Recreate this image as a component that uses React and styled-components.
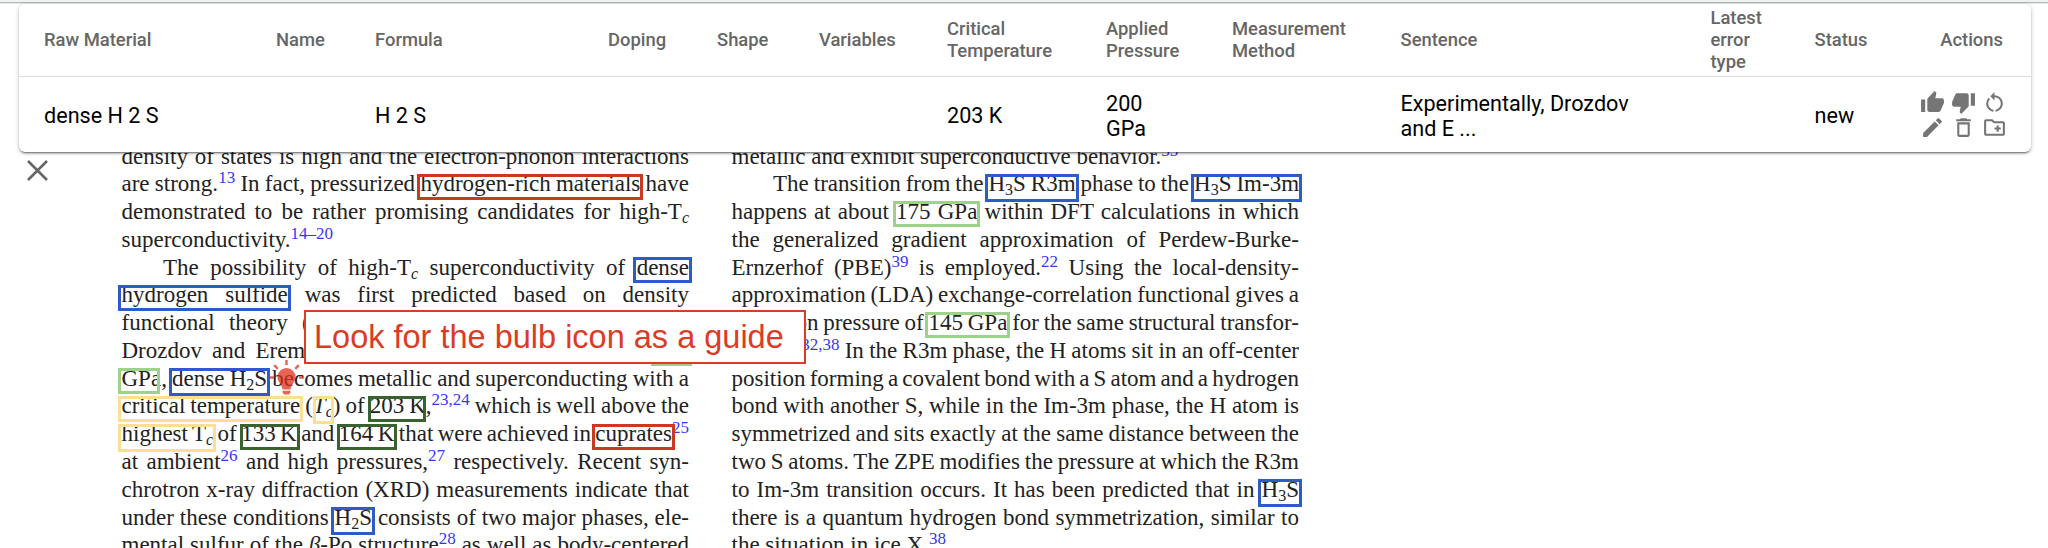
import React from "react";
import styled, { createGlobalStyle } from "styled-components";
import {
  MdThumbUp,
  MdThumbDown,
  MdRestartAlt,
  MdEdit,
  MdDeleteOutline,
  MdOutlineCreateNewFolder,
} from "react-icons/md";

const GlobalStyle = createGlobalStyle`
  * { box-sizing: border-box; }
  body { margin: 0; background: #fff; }
`;

const COLORS = {
  material: "#c93a1e",
  name: "#2d5cc8",
  pressure: "#9dd389",
  tc: "#fbdf94",
  value: "#3a6130",
};

const Page = styled.main`
  display: flex;
  flex-direction: column;
  height: 548px;
  overflow: hidden;
  font-family: Roboto, sans-serif;
`;

const TopEdge = styled.div`
  flex: none;
  height: 4px;
  border-top: 2px solid #f1f3f3;
  border-bottom: 1px solid #e8eaea;
  background: #b4b8b8;
`;

const Card = styled.section`
  position: relative;
  z-index: 2;
  flex: none;
  height: 148px;
  margin: 0 17px 0 19px;
  background: #fff;
  border-radius: 6px;
  box-shadow: 0 2px 2px -1px rgba(0, 0, 0, 0.5), 0 1px 4px rgba(0, 0, 0, 0.25);
`;

const Row = styled.div`
  display: grid;
  grid-template-columns: 232px 99px 233px 109px 102px 128px 159px 126px 168.5px 310px 104px 90px 1fr;
  align-items: center;
  padding: 0 25px;
`;

const HeadRow = styled(Row)`
  height: 73px;
  padding-bottom: 1px;
  border-bottom: 1px solid #dcdcdc;
  color: #666;
  font-size: 18.4px;
  font-weight: 500;
  line-height: 22px;
`;

const BodyRow = styled(Row)`
  height: 75px;
  padding-top: 3px;
  color: #000;
  font-size: 21.6px;
  line-height: 25.5px;
`;

const Cell = styled.div`
  width: ${(p) => p.$width || "auto"};
  text-align: ${(p) => p.$align || "left"};
  padding-right: ${(p) => p.$pad || 0};
`;

const Actions = styled.div`
  display: grid;
  grid-template-columns: repeat(3, 31px);
  justify-content: end;
  justify-items: center;
  align-items: center;
  grid-auto-rows: 25.5px;
  margin: -2px -4px 0 0;
  color: #757575;
  font-size: 25px;
  svg { display: block; }
`;

const Viewer = styled.section`
  position: relative;
  display: flex;
  align-items: flex-start;
  margin-top: -11px;
`;

const CloseButton = styled.button`
  flex: none;
  width: 121.5px;
  padding: 19px 0 0 27px;
  border: 0;
  background: none;
  text-align: left;
  svg { display: block; }
`;

const Column = styled.article`
  flex: none;
  width: 567.5px;
  margin-right: 42.5px;
  padding-top: 1.6px;
  color: #222;
  font-family: "Liberation Serif", serif;
  font-size: 23px;
  line-height: 27.77px;
`;

const Line = styled.div`
  height: 27.77px;
  padding-left: ${(p) => (p.$indent ? "41.5px" : 0)};
  white-space: nowrap;
  word-spacing: ${(p) => (p.$loose ? 0 : "-3px")};
  text-align: left;
  text-align-last: ${(p) => (p.$loose ? "left" : "justify")};
`;

const Ref = styled.sup`
  color: #3a36f5;
  font-size: 17px;
  line-height: 0;
  vertical-align: 8.4px;
`;

const Sub = styled.sub`
  font-size: 16px;
  font-style: ${(p) => (p.$italic ? "italic" : "normal")};
  line-height: 0;
  vertical-align: -3.5px;
`;

const Mark = styled.span`
  position: relative;
  &::after {
    content: "";
    position: absolute;
    top: 2.3px;
    bottom: ${(p) => (p.$tall ? "-5.3px" : "-3.3px")};
    left: ${(p) => p.$l ?? -3.5}px;
    right: ${(p) => p.$r ?? -3}px;
    border: 3px solid ${(p) => COLORS[p.$kind]};
  }
`;

const Callout = styled.aside`
  position: absolute;
  z-index: 1;
  top: 169px;
  left: 304px;
  display: flex;
  align-items: center;
  width: 502px;
  height: 54px;
  padding: 1px 0 0 8px;
  border: 2px solid #dc3b26;
  background: #fff;
  color: #dc3b26;
  font: 32.5px "Liberation Sans", sans-serif;
  white-space: nowrap;
`;

const BulbBadge = styled.svg`
  position: absolute;
  top: 219px;
  left: 269px;
`;

const Tc = () => (
  <>
    T<Sub $italic>c</Sub>
  </>
);
const Chem = ({ n, tail }) => (
  <>
    H<Sub>{n}</Sub>
    {tail}
  </>
);

const Bulb = () => (
  <BulbBadge width="35" height="35" viewBox="0 0 35 35" fill="#e2301c" stroke="none" opacity="0.75">
    <path d="M17.5 8a9.1 9.1 0 0 1 9.1 9.1c0 3.2-1.7 5-3.1 7.2-.9 1.5-1.7 3-2.1 5.2h-7.8c-.4-2.2-1.2-3.7-2.1-5.2-1.4-2.2-3.1-4-3.1-7.2A9.1 9.1 0 0 1 17.5 8z" />
    <path d="M13.6 30.8h7.8v1.4l-1.4 2.3h-5l-1.4-2.3z" />
    <path
      d="M17.5 0v5M5.2 5.2l3.6 3.6M29.8 5.2l-3.6 3.6M.3 17.5h4.6M30.1 17.5h4.6"
      stroke="#e2301c"
      strokeWidth="2.4"
    />
  </BulbBadge>
);

const headers = [
  "Raw Material",
  "Name",
  "Formula",
  "Doping",
  "Shape",
  "Variables",
  "Critical Temperature",
  "Applied Pressure",
  "Measurement Method",
  "Sentence",
  "Latest error type",
  "Status",
];
const headerWidths = { 6: "115px", 7: "80px", 8: "125px", 10: "60px" };

const record = [
  "dense H 2 S", "", "H 2 S", "", "", "", "203 K", "200 GPa", "",
  "Experimentally, Drozdov and E ...", "", "new",
];
const recordWidths = { 7: "50px", 9: "250px" };

export default function App() {
  return (
    <Page>
      <GlobalStyle />
      <TopEdge />
      <Card>
        <HeadRow>
          {headers.map((h, i) => (
            <Cell key={h} $width={headerWidths[i]}>{h}</Cell>
          ))}
          <Cell $align="right" $pad="3px">Actions</Cell>
        </HeadRow>
        <BodyRow>
          {record.map((v, i) => (
            <Cell key={i} $width={recordWidths[i]}>{v}</Cell>
          ))}
          <Actions>
            <MdThumbUp />
            <MdThumbDown />
            <MdRestartAlt />
            <MdEdit />
            <MdDeleteOutline />
            <MdOutlineCreateNewFolder />
          </Actions>
        </BodyRow>
      </Card>

      <Viewer>
        <CloseButton aria-label="Close">
          <svg width="21" height="21" viewBox="0 0 21 21" stroke="#666" strokeWidth="2.6">
            <path d="M1 1l19 19M20 1L1 20" />
          </svg>
        </CloseButton>

        <Column>
          <Line>density of states is high and the electron-phonon interactions</Line>
          <Line>
            are strong.<Ref>13</Ref> In fact, pressurized <Mark $kind="material">hydrogen-rich materials</Mark> have
          </Line>
          <Line>demonstrated to be rather promising candidates for high-<Tc /></Line>
          <Line $loose>superconductivity.<Ref>14–20</Ref></Line>
          <Line $indent>
            The possibility of high-<Tc /> superconductivity of <Mark $kind="name">dense</Mark>
          </Line>
          <Line>
            <Mark $kind="name">hydrogen sulfide</Mark> was first predicted based on density
          </Line>
          <Line>functional theory (DFT) calculations.<Ref>21,22</Ref> Experimentally,</Line>
          <Line>
            Drozdov and Eremets have found that at pressures of <Mark $kind="pressure">200</Mark>
          </Line>
          <Line>
            <Mark $kind="pressure" $r={1}>GPa</Mark>, <Mark $kind="name" $tall>dense <Chem n="2" tail="S" /></Mark> becomes
            metallic and superconducting with a
          </Line>
          <Line>
            <Mark $kind="tc">critical temperature</Mark> (<Mark $kind="tc" $tall $l={0} $r={-1}><i>T</i><Sub $italic>c</Sub></Mark>) of{" "}
            <Mark $kind="value" $l={-2} $r={0}>203 K</Mark>,<Ref>23,24</Ref> which is well above the
          </Line>
          <Line>
            <Mark $kind="tc" $tall>highest <Tc /></Mark> of <Mark $kind="value" $l={-1.5}>133 K</Mark> and{" "}
            <Mark $kind="value" $l={-2}>164 K</Mark> that were achieved in <Mark $kind="material">cuprates</Mark><Ref>25</Ref>
          </Line>
          <Line>at ambient<Ref>26</Ref> and high pressures,<Ref>27</Ref> respectively. Recent syn-</Line>
          <Line>chrotron x-ray diffraction (XRD) measurements indicate that</Line>
          <Line>
            under these conditions <Mark $kind="name" $tall><Chem n="2" tail="S" /></Mark> consists of two major phases, ele-
          </Line>
          <Line>mental sulfur of the <i>β</i>-Po structure<Ref>28</Ref> as well as body-centered</Line>
        </Column>

        <Column>
          <Line $loose>metallic and exhibit superconductive behavior.<Ref>35</Ref></Line>
          <Line $indent>
            The transition from the <Mark $kind="name" $tall><Chem n="3" tail="S R3m" /></Mark> phase to the{" "}
            <Mark $kind="name" $tall><Chem n="3" tail="S Im-3m" /></Mark>
          </Line>
          <Line>
            happens at about <Mark $kind="pressure">175 GPa</Mark> within DFT calculations in which
          </Line>
          <Line>the generalized gradient approximation of Perdew-Burke-</Line>
          <Line>Ernzerhof (PBE)<Ref>39</Ref> is employed.<Ref>22</Ref> Using the local-density-</Line>
          <Line>approximation (LDA) exchange-correlation functional gives a</Line>
          <Line>
            transition pressure of <Mark $kind="pressure">145 GPa</Mark> for the same structural transfor-
          </Line>
          <Line>mation.<Ref>32,38</Ref> In the R3m phase, the H atoms sit in an off-center</Line>
          <Line>position forming a covalent bond with a S atom and a hydrogen</Line>
          <Line>bond with another S, while in the Im-3m phase, the H atom is</Line>
          <Line>symmetrized and sits exactly at the same distance between the</Line>
          <Line>two S atoms. The ZPE modifies the pressure at which the R3m</Line>
          <Line>
            to Im-3m transition occurs. It has been predicted that in{" "}
            <Mark $kind="name" $tall><Chem n="3" tail="S" /></Mark>
          </Line>
          <Line>there is a quantum hydrogen bond symmetrization, similar to</Line>
          <Line $loose>the situation in ice X.<Ref>38</Ref></Line>
        </Column>

        <Bulb />
        <Callout>Look for the bulb icon as a guide</Callout>
      </Viewer>
    </Page>
  );
}
